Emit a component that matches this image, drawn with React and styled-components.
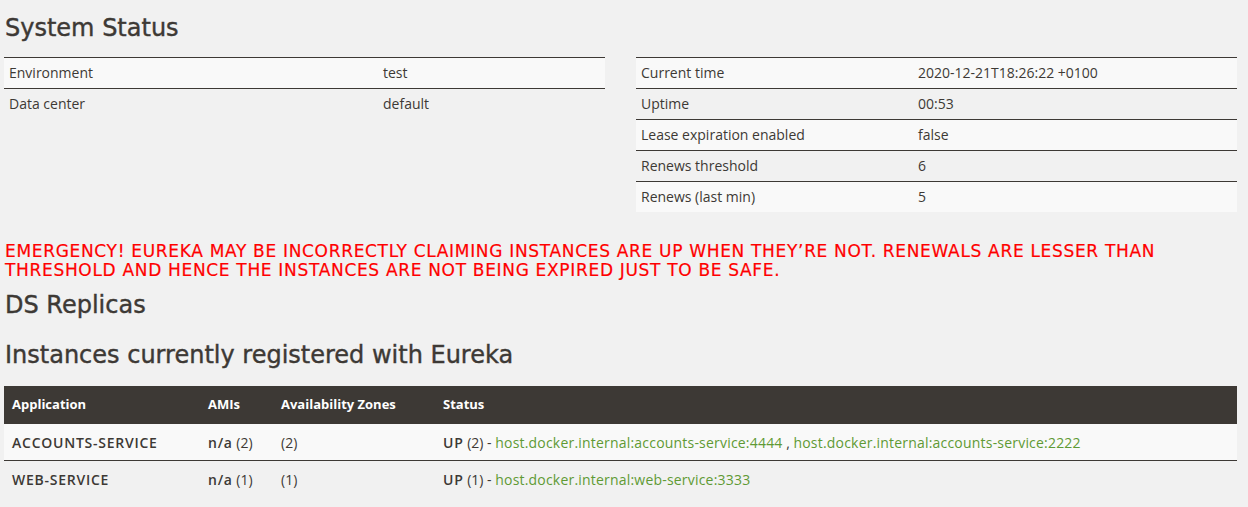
import styled, { createGlobalStyle } from "styled-components";

const GlobalStyle = createGlobalStyle`
  html, body {
    margin: 0;
    padding: 0;
    background: #f1f1f1;
  }
  body {
    font-family: "Open Sans", "Liberation Sans", sans-serif;
    font-size: 14px;
    color: #3d3935;
  }
`;

const generalInfo = [
  ["Environment", "test"],
  ["Data center", "default"],
];

const leaseInfo = [
  ["Current time", "2020-12-21T18:26:22 +0100"],
  ["Uptime", "00:53"],
  ["Lease expiration enabled", "false"],
  ["Renews threshold", "6"],
  ["Renews (last min)", "5"],
];

const apps = [
  {
    name: "ACCOUNTS-SERVICE",
    count: 2,
    links: [
      "host.docker.internal:accounts-service:4444",
      "host.docker.internal:accounts-service:2222",
    ],
  },
  {
    name: "WEB-SERVICE",
    count: 1,
    links: ["host.docker.internal:web-service:3333"],
  },
];

const App = () => {
  return (
    <Page>
      <GlobalStyle />
      <Heading>System Status</Heading>
      <StatusRow>
        <InfoTable $firstCol="374px">
          <tbody>
            {generalInfo.map(([label, value]) => (
              <tr key={label}>
                <td>{label}</td>
                <td>{value}</td>
              </tr>
            ))}
          </tbody>
        </InfoTable>
        <InfoTable $firstCol="277px">
          <tbody>
            {leaseInfo.map(([label, value]) => (
              <tr key={label}>
                <td>{label}</td>
                <td>{value}</td>
              </tr>
            ))}
          </tbody>
        </InfoTable>
      </StatusRow>
      <Emergency>
        EMERGENCY! EUREKA MAY BE INCORRECTLY CLAIMING INSTANCES ARE UP WHEN THEY’RE NOT.
        RENEWALS ARE LESSER THAN THRESHOLD AND HENCE THE INSTANCES ARE NOT BEING EXPIRED
        JUST TO BE SAFE.
      </Emergency>
      <SubHeading>DS Replicas</SubHeading>
      <SubHeading $top="20px">Instances currently registered with Eureka</SubHeading>
      <InstancesTable>
        <thead>
          <tr>
            <HeadCell $width="196px">Application</HeadCell>
            <HeadCell $width="73px">AMIs</HeadCell>
            <HeadCell $width="162px">Availability Zones</HeadCell>
            <HeadCell>Status</HeadCell>
          </tr>
        </thead>
        <tbody>
          {apps.map((app) => (
            <tr key={app.name}>
              <td>
                <b>{app.name}</b>
              </td>
              <td>
                <b>n/a</b> ({app.count})
              </td>
              <td>({app.count})</td>
              <td>
                <b>UP</b> ({app.count}) -{" "}
                {app.links.map((link, i) => (
                  <span key={link}>
                    {i > 0 && " , "}
                    <Link href="#">{link}</Link>
                  </span>
                ))}
              </td>
            </tr>
          ))}
        </tbody>
      </InstancesTable>
    </Page>
  );
};

const Page = styled.div`
  padding: 0 11px 0 4px;
`;

const Heading = styled.h1`
  font-family: "DejaVu Sans", sans-serif;
  font-size: 24px;
  font-weight: 400;
  -webkit-text-stroke: 0.4px #3d3935;
  margin: 0;
  padding: 13px 0 14px 1px;
  line-height: 30px;
  color: #3d3935;
`;

const StatusRow = styled.div`
  display: grid;
  grid-template-columns: 601px 601px;
  justify-content: space-between;
  align-items: start;
`;

const InfoTable = styled.table`
  width: 100%;
  border-collapse: collapse;
  border-top: 1px solid #3d3935;

  td {
    box-sizing: border-box;
    padding: 0 5px;
    height: 30px;
    line-height: 30px;
    border-bottom: 1px solid #3d3935;
  }
  td:first-child {
    width: ${(p) => p.$firstCol};
  }
  tr:nth-child(odd) {
    background: #f9f9f9;
  }
  tr:last-child td {
    border-bottom: none;
  }
`;

const Emergency = styled.h4`
  font-family: "DejaVu Sans", sans-serif;
  color: #ff0000;
  font-size: 17px;
  font-weight: 400;
  letter-spacing: 0.68px;
  -webkit-text-stroke: 0.2px #ff0000;
  line-height: 19px;
  margin: 0;
  padding: 30px 0 0 1px;
`;

const SubHeading = styled.h1`
  font-family: "DejaVu Sans", sans-serif;
  font-size: 24px;
  font-weight: 400;
  -webkit-text-stroke: 0.4px #3d3935;
  margin: 0;
  padding: ${(p) => p.$top || "10px"} 0 0 1px;
  line-height: 30px;
  color: #3d3935;
`;

const InstancesTable = styled.table`
  width: 1233px;
  margin-top: 16px;
  border-collapse: collapse;
  text-align: left;

  td {
    height: 36px;
    padding: 0 8px;
    border-bottom: 1px solid #3d3935;
  }
  tbody tr:nth-child(odd) {
    background: #f9f9f9;
  }
  tbody tr:last-child td {
    border-bottom: none;
  }
  b {
    font-weight: 600;
    letter-spacing: 0.75px;
  }
`;

const HeadCell = styled.th`
  box-sizing: border-box;
  width: ${(p) => p.$width || "auto"};
  background: #3d3935;
  color: #fff;
  font-size: 13px;
  font-weight: 700;
  height: 38px;
  padding: 0 8px 3px;
`;

const Link = styled.a`
  color: #5f9a34;
  letter-spacing: 0.2px;
  text-decoration: none;
`;

export default App;
